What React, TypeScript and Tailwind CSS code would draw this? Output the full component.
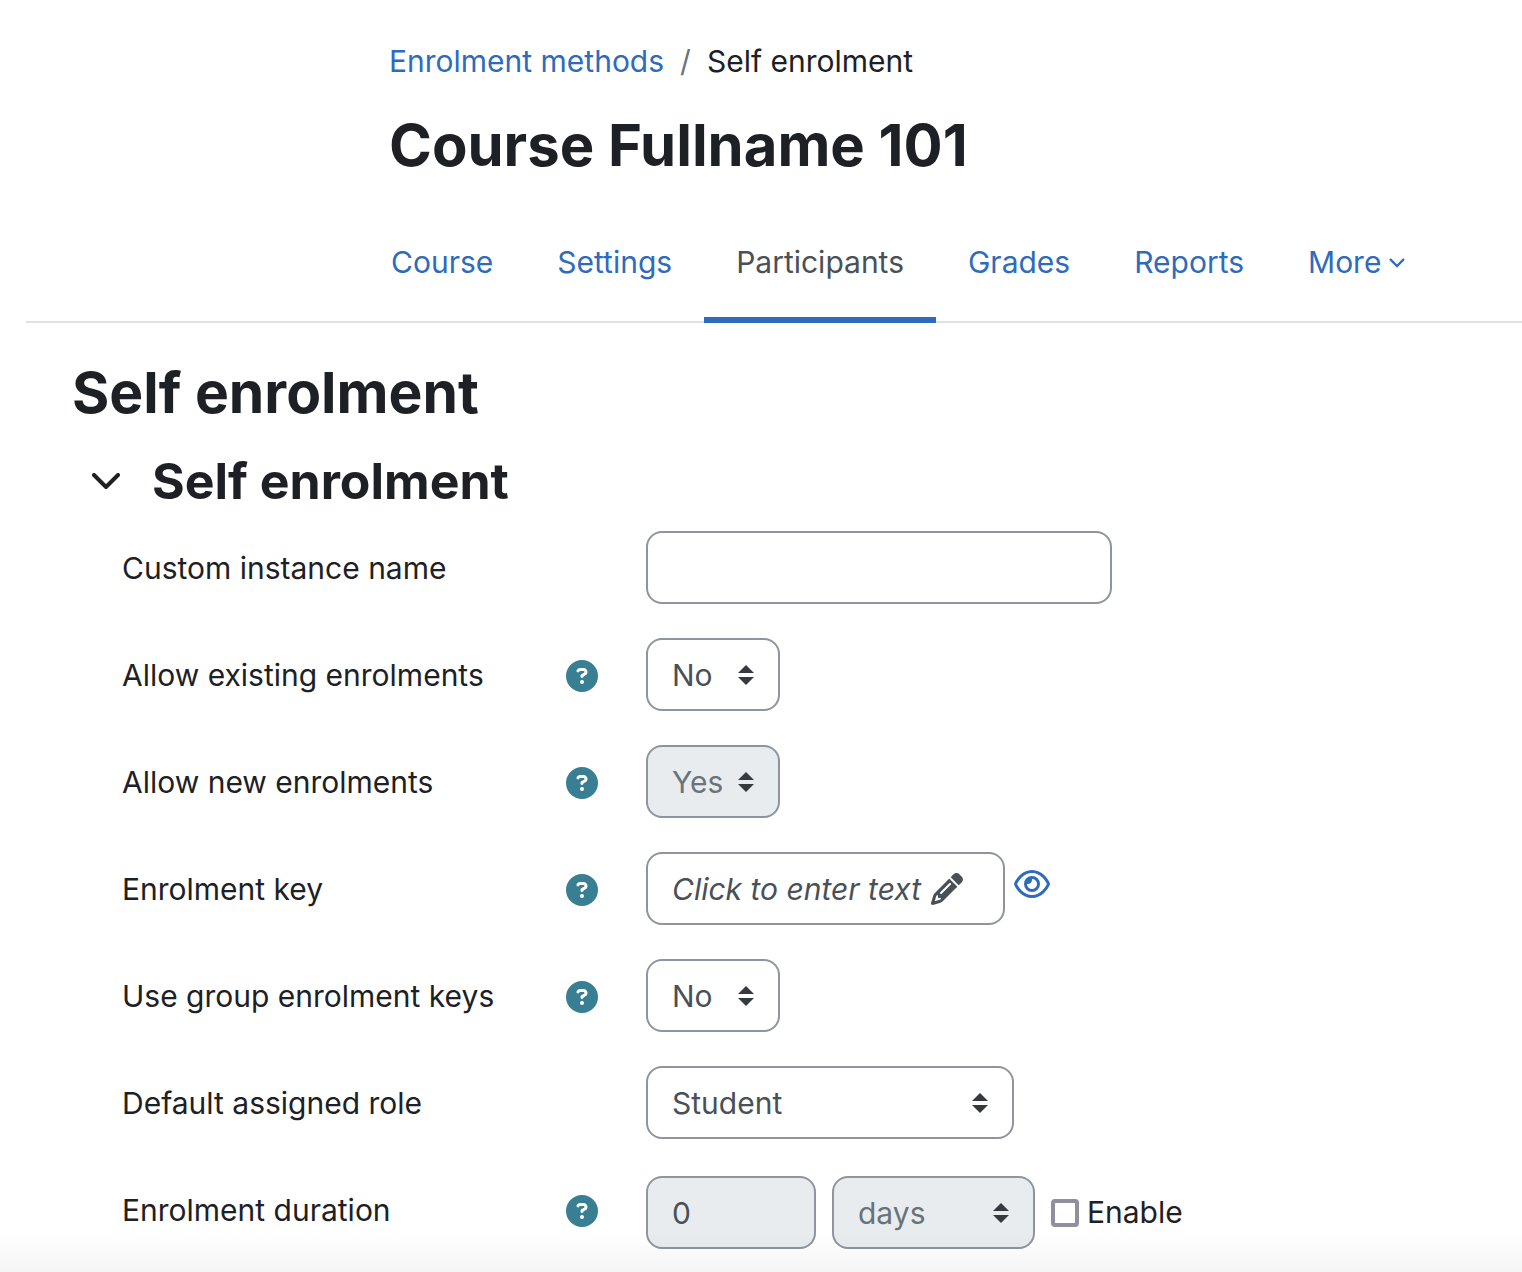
import { useState } from 'react';
import type { ReactNode } from 'react';
import { FaCircleQuestion, FaPencil, FaRegEye } from 'react-icons/fa6';
import clsx from 'clsx';

const tabs = ['Course', 'Settings', 'Participants', 'Grades', 'Reports'];

const control = 'h-[73px] rounded-2xl border-2 border-[#8f959e] px-6';

interface RowProps {
  id: string;
  label: string;
  help?: boolean;
  children: ReactNode;
}

function Row({ id, label, help, children }: RowProps) {
  return (
    <div className="flex items-start gap-12">
      <div className="flex w-[476px] shrink-0 items-center justify-between pt-[15px]">
        <label htmlFor={id} className="leading-[45px]">{label}</label>
        {help && (
          <button type="button" aria-label={`Help with ${label}`} className="text-[#387f93]">
            <FaCircleQuestion className="size-8" />
          </button>
        )}
      </div>
      <div className="flex min-w-0 items-center">{children}</div>
    </div>
  );
}

interface SelectProps {
  id: string;
  options: string[];
  className: string;
  disabled?: boolean;
  label?: string;
}

function Select({ id, options, className, disabled, label }: SelectProps) {
  return (
    <div className={clsx('relative', className)}>
      <select
        id={id}
        aria-label={label}
        disabled={disabled}
        className={clsx(
          control,
          'w-full appearance-none pt-0.5',
          disabled ? 'bg-[#e9ecef] text-[#6a737b] opacity-100' : 'bg-white text-[#495057]'
        )}
      >
        {options.map((option) => (
          <option key={option}>{option}</option>
        ))}
      </select>
      <svg viewBox="0 0 16 20" className="pointer-events-none absolute top-[27px] right-[26px] h-5 w-4 fill-[#343a40]">
        <path d="M8 0 16 8H0zM8 20 0 12h16z" />
      </svg>
    </div>
  );
}

export default function App() {
  const [open, setOpen] = useState(true);

  return (
    <div className="min-h-screen bg-white pb-6 pl-[26px] font-['Inter',sans-serif] text-[30px] text-[#1d2125]">
      <header className="border-b-2 border-[#dee2e6] pt-[39px] pl-[333px]">
        <nav aria-label="Breadcrumb" className="pl-[30px]">
          <ol className="flex gap-4 leading-[45px]">
            <li><a href="#" className="text-[#2f6bbc]">Enrolment methods</a></li>
            <li aria-hidden="true" className="text-[#6a737b]">/</li>
            <li>Self enrolment</li>
          </ol>
        </nav>
        <h1 className="mt-[25px] pl-[30px] text-[58px] leading-[72px] font-bold">Course Fullname 101</h1>

        <nav className="mt-5 -mb-0.5 flex">
          {tabs.map((tab) => (
            <a
              key={tab}
              href="#"
              className={clsx(
                'border-b-[6px] px-8 pt-[39px] pb-8 leading-[45px]',
                tab === 'Participants' ? 'border-[#2f6bbc] text-[#495057]' : 'border-transparent text-[#2f6bbc]'
              )}
            >
              {tab}
            </a>
          ))}
          <button type="button" className="flex items-center gap-2 border-b-[6px] border-transparent px-8 pt-[39px] pb-8 leading-[45px] text-[#2f6bbc]">
            More
            <svg viewBox="0 0 16 10" className="h-2.5 w-4 fill-none stroke-current stroke-[2.4]">
              <path d="M1 1l7 7 7-7" />
            </svg>
          </button>
        </nav>
      </header>

      <main className="pl-[46px]">
        <h2 className="pt-[34px] text-[57px] leading-[72px] font-bold">Self enrolment</h2>
        <div className="mt-5 flex items-center gap-8 pl-5">
          <button type="button" aria-label="Collapse" aria-expanded={open} onClick={() => setOpen(!open)}>
            <svg viewBox="0 0 28 17" className="h-[17px] w-7 fill-none stroke-current stroke-4">
              <path d="M2 2l12 12L26 2" strokeLinecap="round" strokeLinejoin="round" />
            </svg>
          </button>
          <h3 className="text-[50px] leading-[64px] font-bold">Self enrolment</h3>
        </div>

        {open && (
          <form className="mt-[18px] flex flex-col gap-[34px] pl-[50px]">
            <Row id="name" label="Custom instance name">
              <input id="name" type="text" className={clsx(control, 'w-[466px] bg-white')} />
            </Row>
            <Row id="existing" label="Allow existing enrolments" help>
              <Select id="existing" options={['No', 'Yes']} className="w-[134px]" />
            </Row>
            <Row id="new" label="Allow new enrolments" help>
              <Select id="new" options={['Yes', 'No']} className="w-[134px]" disabled />
            </Row>
            <Row id="key" label="Enrolment key" help>
              <button id="key" type="button" className={clsx(control, 'flex w-[359px] items-center gap-2.5 whitespace-nowrap text-[#495057] italic')}>
                <span className="pt-0.5">Click to enter text</span>
                <FaPencil className="size-8 shrink-0" />
              </button>
              <button type="button" aria-label="Reveal" className="mb-2.5 ml-[9px] text-[#2f6bbc]">
                <FaRegEye className="h-8 w-9" />
              </button>
            </Row>
            <Row id="groupkeys" label="Use group enrolment keys" help>
              <Select id="groupkeys" options={['No', 'Yes']} className="w-[134px]" />
            </Row>
            <Row id="role" label="Default assigned role">
              <Select id="role" options={['Student', 'Teacher']} className="w-[368px]" />
            </Row>
            <Row id="duration" label="Enrolment duration" help>
              <div className="flex items-center gap-4 pt-[3px]">
                <input id="duration" type="text" defaultValue="0" disabled className={clsx(control, 'w-[170px] bg-[#e9ecef] text-[#495057]')} />
                <Select id="unit" label="Time unit" options={['days', 'weeks', 'hours']} className="w-[203px]" disabled />
                <label className="flex items-center gap-2">
                  <input type="checkbox" className="size-7 appearance-none rounded border-4 border-[#8f8f9d] bg-white checked:bg-[#2f6bbc]" />
                  Enable
                </label>
              </div>
            </Row>
          </form>
        )}
      </main>

      <div className="pointer-events-none fixed inset-x-0 bottom-0 h-10 bg-linear-to-b from-transparent to-black/4" />
    </div>
  );
}
